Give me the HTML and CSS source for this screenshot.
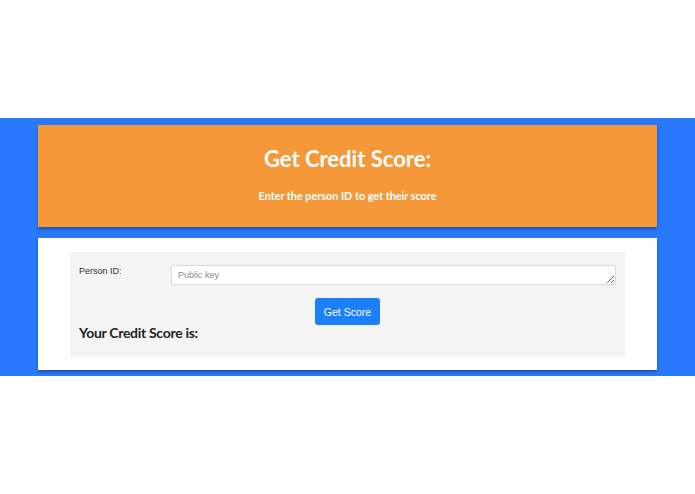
FILE: index.html
```html
<!DOCTYPE html>
<html>
<head>
<meta charset="utf-8">
<link rel="stylesheet" href="styles.css">
</head>
<body>
<div class="top-space"></div>
<section class="band">
  <header class="hero">
    <h1 class="hero-title">Get Credit Score:</h1>
    <p class="hero-sub">Enter the person ID to get their score</p>
  </header>
  <main class="card">
    <div class="panel">
      <div class="field-row">
        <label class="field-label" for="pid">Person ID:</label>
        <textarea id="pid" class="field-input" rows="1" placeholder="Public key"></textarea>
      </div>
      <div class="btn-row">
        <button class="btn">Get Score</button>
      </div>
      <h2 class="result">Your Credit Score is:</h2>
    </div>
  </main>
</section>
</body>
</html>
```

FILE: styles.css
```css
html, body {
  margin: 0;
  padding: 0;
  background: #ffffff;
}
body {
  font-family: "Liberation Sans", Arial, sans-serif;
}
.top-space {
  height: 118px;
}
.band {
  background: #2979fd;
  padding: 7px 38px 6px 38px;
  display: flex;
  flex-direction: column;
  gap: 11px;
}
.hero {
  background: #f4983a;
  box-shadow: 0 2px 3px rgba(0, 0, 0, 0.35);
  height: 102px;
  box-sizing: border-box;
  padding-top: 21px;
  text-align: center;
  color: #ffffff;
  font-family: Lato, "Noto Sans", sans-serif;
  font-weight: 700;
}
.hero-title {
  margin: 0;
  font-size: 22px;
  font-weight: 700;
  line-height: 26px;
}
.hero-sub {
  margin: 17px 0 0 0;
  font-size: 10.8px;
  line-height: 13px;
}
.card {
  background: #ffffff;
  box-shadow: 0 2px 3px rgba(0, 0, 0, 0.35);
  padding: 14px 32px 13px 32px;
}
.panel {
  background: #f4f4f4;
  height: 105px;
  box-sizing: border-box;
  padding: 13px 9px 0 9px;
}
.field-row {
  display: flex;
  align-items: flex-start;
}
.field-label {
  width: 92px;
  flex: none;
  font-size: 9px;
  line-height: 10px;
  padding-top: 1px;
  color: #333333;
}
.field-input {
  flex: 1;
  height: 20px;
  box-sizing: border-box;
  margin: 0;
  border: 1px solid #dadada;
  border-radius: 2px;
  background: #ffffff;
  padding: 4px 6px 0 6px;
  font-family: "Liberation Sans", Arial, sans-serif;
  font-size: 9px;
  line-height: 11px;
  color: #333;
  resize: vertical;
}
.field-input::placeholder {
  color: #8a8a8a;
}
.btn-row {
  display: flex;
  justify-content: center;
  margin-top: 13px;
}
.btn {
  width: 65px;
  height: 27px;
  padding: 0;
  border: none;
  border-radius: 3px;
  background: #1b80fa;
  color: #ffffff;
  font-family: "Liberation Sans", Arial, sans-serif;
  font-size: 10.5px;
}
.result {
  margin: 1px 0 0 0;
  font-family: Lato, "Noto Sans", sans-serif;
  font-weight: 700;
  font-size: 14px;
  letter-spacing: -0.3px;
  line-height: 14px;
  color: #222222;
}
```
